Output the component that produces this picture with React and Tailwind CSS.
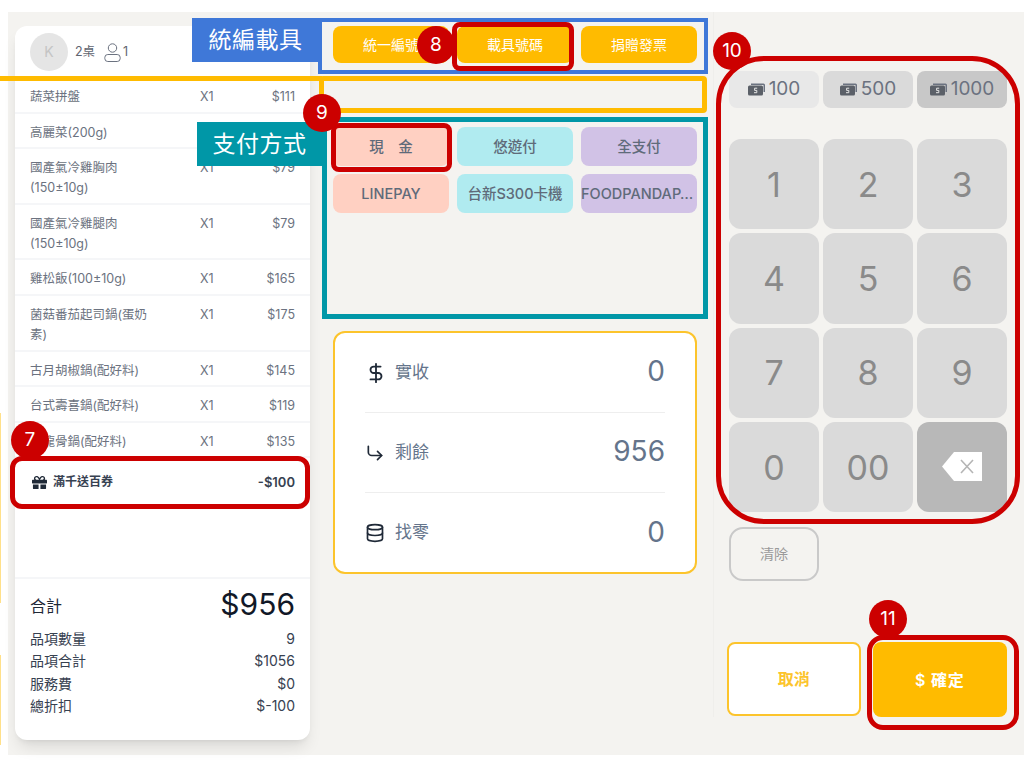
import React from 'react';
import { DollarSign, CornerDownRight, Database } from 'lucide-react';
import { FaGift } from 'react-icons/fa';

const items = [
  { name: '蔬菜拼盤', price: '$111' },
  { name: '高麗菜(200g)', price: '$89' },
  { name: '國產氣冷雞胸肉(150±10g)', price: '$79' },
  { name: '國產氣冷雞腿肉(150±10g)', price: '$79' },
  { name: '雞松飯(100±10g)', price: '$165' },
  { name: '菌菇番茄起司鍋(蛋奶素)', price: '$175' },
  { name: '古月胡椒鍋(配好料)', price: '$145' },
  { name: '台式壽喜鍋(配好料)', price: '$119' },
  { name: '豬龍骨鍋(配好料)', price: '$135' },
];

const totals = [
  ['品項數量', '9'],
  ['品項合計', '$1056'],
  ['服務費', '$0'],
  ['總折扣', '$-100'],
];

const payments = [
  { label: '現　金', color: 'bg-[#ffd0c2]' },
  { label: '悠遊付', color: 'bg-[#b0ebf0]' },
  { label: '全支付', color: 'bg-[#d1c2e6]' },
  { label: 'LINEPAY', color: 'bg-[#ffd0c2]' },
  { label: '台新S300卡機', color: 'bg-[#b0ebf0]' },
  { label: 'FOODPANDAPAY', color: 'bg-[#d1c2e6]' },
];

function Badge({ className, children }) {
  return (
    <div className={`absolute z-30 flex h-[38px] w-[38px] items-center justify-center rounded-full bg-[#cc0000] text-[19px] text-white ${className}`}>
      {children}
    </div>
  );
}

function Frame({ className }) {
  return <div className={`pointer-events-none absolute z-20 ${className}`} />;
}

function UserIcon() {
  return (
    <svg width="17" height="19" viewBox="0 0 17 19" fill="none" stroke="#6b7280" strokeWidth="1">
      <circle cx="8.5" cy="5" r="4.2" />
      <rect x="0.8" y="11.5" width="15.4" height="7" rx="3" />
    </svg>
  );
}

function BillIcon() {
  return (
    <svg width="17" height="13" viewBox="0 0 17 13">
      <path d="M3 0.5H15.5A1.5 1.5 0 0 1 17 2V9H15.5V2H3Z" fill="#6b7280" />
      <rect x="0" y="2.5" width="15" height="10" rx="1.5" fill="#5b6068" />
      <path d="M9.2 5.2H6.6V7.4H8.8V9.7H6" stroke="#e5e5e5" strokeWidth="1" fill="none" />
    </svg>
  );
}

function BackspaceIcon() {
  return (
    <svg width="40" height="30" viewBox="0 0 40 30">
      <path d="M12 0H40V29H12L0 14.5Z" fill="#ffffff" />
      <path d="M19 8L31 21M31 8L19 21" stroke="#b5b5b5" strokeWidth="1.6" fill="none" />
    </svg>
  );
}

function OrderCard() {
  return (
    <div className="flex h-[714px] w-[295px] flex-col rounded-xl bg-white text-[12.5px] text-[#6b7280] shadow-lg">
      <div className="flex h-[52px] items-center px-[15px]">
        <div className="flex h-[38px] w-[38px] items-center justify-center rounded-full bg-[#e5e5e5] text-sm text-[#c4c4c4]">K</div>
        <span className="ml-[7px] w-[29px] text-[12.5px] text-[#5f6570]">2桌</span>
        <UserIcon />
        <span className="ml-[2px] text-[12.5px] text-[#5f6570]">1</span>
      </div>
      <div>
        {items.map((it) => (
          <div key={it.name} className="flex border-b-2 border-[#f5f6f8] pt-[9px] pb-[4.6px] pl-[15px] pr-[15px] leading-[20px]">
            <div className="w-[125px]">{it.name}</div>
            <div className="ml-[45px] w-[40px]">X1</div>
            <div className="flex-1 text-right">{it.price}</div>
          </div>
        ))}
      </div>
      <div className="flex h-[46px] items-center px-[15px] pt-[2px] text-xs font-semibold text-[#374151]">
        <FaGift className="ml-[2px] mr-[6px] h-[15px] w-[15px] text-[#1f2937]" />
        <span>滿千送百券</span>
        <span className="ml-auto text-[13px]">-$100</span>
      </div>
      <div className="mt-[72.6px] flex-1 border-t-2 border-[#f5f6f8] px-[15px] pt-[3px]">
        <div className="flex items-center justify-between">
          <span className="mt-[4px] text-base text-[#1f2937]">合計</span>
          <span className="text-[30px] leading-[44px] text-[#111827]">$956</span>
        </div>
        <div className="mt-[2px] text-[14px] leading-[22.5px] text-[#374151]">
          {totals.map(([k, v]) => (
            <div key={k} className="flex justify-between">
              <span>{k}</span>
              <span>{v}</span>
            </div>
          ))}
        </div>
      </div>
    </div>
  );
}

function SummaryRow({ icon, label, value, border }) {
  return (
    <div className={`flex h-[80px] items-center ${border ? 'border-b border-[#eeeeee]' : ''}`}>
      <div className="flex w-[30px] items-center text-[#1f2937]">{icon}</div>
      <span className="text-[17px] text-[#64748b]">{label}</span>
      <span className="mb-[3px] ml-auto text-[28px] text-[#64748b]">{value}</span>
    </div>
  );
}

function MiddleColumn() {
  return (
    <div className="flex w-[364px] flex-col">
      <div className="grid grid-cols-3 gap-2 text-sm text-white">
        {['統一編號', '載具號碼', '捐贈發票'].map((t) => (
          <div key={t} className="flex h-[37px] items-center justify-center rounded-lg bg-[#ffbb00]">{t}</div>
        ))}
      </div>
      <div className="mt-[64px] grid grid-cols-3 gap-x-2 gap-y-2 text-[14.5px] font-medium text-[#5f6b7a]">
        {payments.map((p) => (
          <div key={p.label} className={`flex h-[39px] items-center justify-center rounded-lg ${p.color}`}>
            <span className="truncate">{p.label}</span>
          </div>
        ))}
      </div>
      <div className="mt-[118px] h-[243px] rounded-xl border-2 border-[#fcc42c] bg-white px-[30px]">
        <SummaryRow border icon={<DollarSign size={22} />} label="實收" value="0" />
        <SummaryRow border icon={<CornerDownRight size={20} />} label="剩餘" value="956" />
        <SummaryRow icon={<Database size={20} />} label="找零" value="0" />
      </div>
    </div>
  );
}

function QuickAmount({ value, color }) {
  return (
    <div className={`flex h-[37px] items-center justify-center gap-1 rounded-lg text-[19px] text-[#6b7280] ${color}`}>
      <BillIcon />
      {value}
    </div>
  );
}

function Keypad() {
  const keys = ['1', '2', '3', '4', '5', '6', '7', '8', '9', '0', '00'];
  return (
    <div className="grid grid-cols-3 gap-1">
      {keys.map((k) => (
        <div key={k} className="flex h-[90.3px] items-center justify-center rounded-xl bg-[#dadada] text-[34px] text-[#8a8a8a]">{k}</div>
      ))}
      <div className="flex h-[90.3px] items-center justify-center rounded-xl bg-[#b8b8b8]">
        <BackspaceIcon />
      </div>
    </div>
  );
}

function RightColumn() {
  return (
    <div className="flex w-[311px] flex-col border-l border-[#efeeeb] pl-[15px] pr-[17px] pt-[59px]">
      <div className="grid grid-cols-3 gap-1">
        <QuickAmount value="100" color="bg-[#e8e8e8]" />
        <QuickAmount value="500" color="bg-[#dadada]" />
        <QuickAmount value="1000" color="bg-[#c8c8c8]" />
      </div>
      <div className="mt-[31px]">
        <Keypad />
      </div>
      <div className="mt-[15px] flex h-[54px] w-[90px] items-center justify-center rounded-[14px] border-2 border-[#c9c9c9] text-sm text-[#9a9a9a]">清除</div>
      <div className="-ml-[2px] mt-[61px] flex gap-[12px]">
        <div className="flex h-[74px] w-[135px] items-center justify-center rounded-lg border-2 border-[#fcc42c] bg-white text-base font-semibold text-[#fcc42c]">取消</div>
        <div className="flex h-[75px] w-[136px] items-center justify-center rounded-lg bg-[#ffbb00] text-base font-semibold tracking-wider text-white">$ 確定</div>
      </div>
    </div>
  );
}

export default function App() {
  return (
    <div className="relative h-[768px] w-[1024px] overflow-hidden bg-white font-['Inter','Noto_Sans_CJK_TC',sans-serif]">
      <div className="mt-[12px] ml-[8px] flex h-[743px] bg-[#f4f3f0] pt-[14px]">
        <div className="ml-[7px]">
          <OrderCard />
        </div>
        <div className="ml-[23px]">
          <MiddleColumn />
        </div>
        <div className="-mt-[14px] ml-[16px]">
          <RightColumn />
        </div>
      </div>

      {/* annotation overlays */}
      <Frame className="left-[318px] top-[18px] h-[56px] w-[390px] border-[4px] border-[#3f78d8]" />
      <Frame className="left-[0px] top-[76px] h-[5px] w-[322px] bg-[#ffbb00]" />
      <Frame className="left-[319px] top-[76px] h-[37px] w-[388px] rounded-sm border-[5px] border-[#ffbb00]" />
      <Frame className="left-[322px] top-[117px] h-[202px] w-[386px] border-[5px] border-[#0097a7]" />
      <Frame className="left-[0px] top-[413px] h-[190px] w-[1px] bg-[#ffe08a]" />
      <Frame className="left-[0px] top-[655px] h-[90px] w-[1px] bg-[#ffe08a]" />

      <div className="absolute left-[192px] top-[18px] z-20 flex h-[44px] w-[127px] items-center justify-center bg-[#3f78d8] text-[23px] tracking-[0.5px] text-white">統編載具</div>
      <div className="absolute left-[197px] top-[122px] z-20 flex h-[44px] w-[125px] items-center justify-center bg-[#0097a7] text-[23px] tracking-[0.5px] text-white">支付方式</div>

      <Frame className="left-[10px] top-[456px] h-[53px] w-[300px] rounded-xl border-[5px] border-[#cc0000]" />
      <Frame className="left-[452px] top-[22px] h-[49px] w-[122px] rounded-lg border-[5px] border-[#cc0000]" />
      <Frame className="left-[331px] top-[123px] h-[49px] w-[121px] rounded-lg border-[5px] border-[#cc0000]" />
      <Frame className="left-[716px] top-[56px] h-[468px] w-[304px] rounded-[48px] border-[5px] border-[#cc0000]" />
      <Frame className="left-[867px] top-[635px] h-[95px] w-[152px] rounded-2xl border-[5px] border-[#cc0000]" />

      <Badge className="left-[11px] top-[421px]">7</Badge>
      <Badge className="left-[417px] top-[26px]">8</Badge>
      <Badge className="left-[303px] top-[94px]">9</Badge>
      <Badge className="left-[713px] top-[32px]">10</Badge>
      <Badge className="left-[869px] top-[600px]">11</Badge>
    </div>
  );
}
